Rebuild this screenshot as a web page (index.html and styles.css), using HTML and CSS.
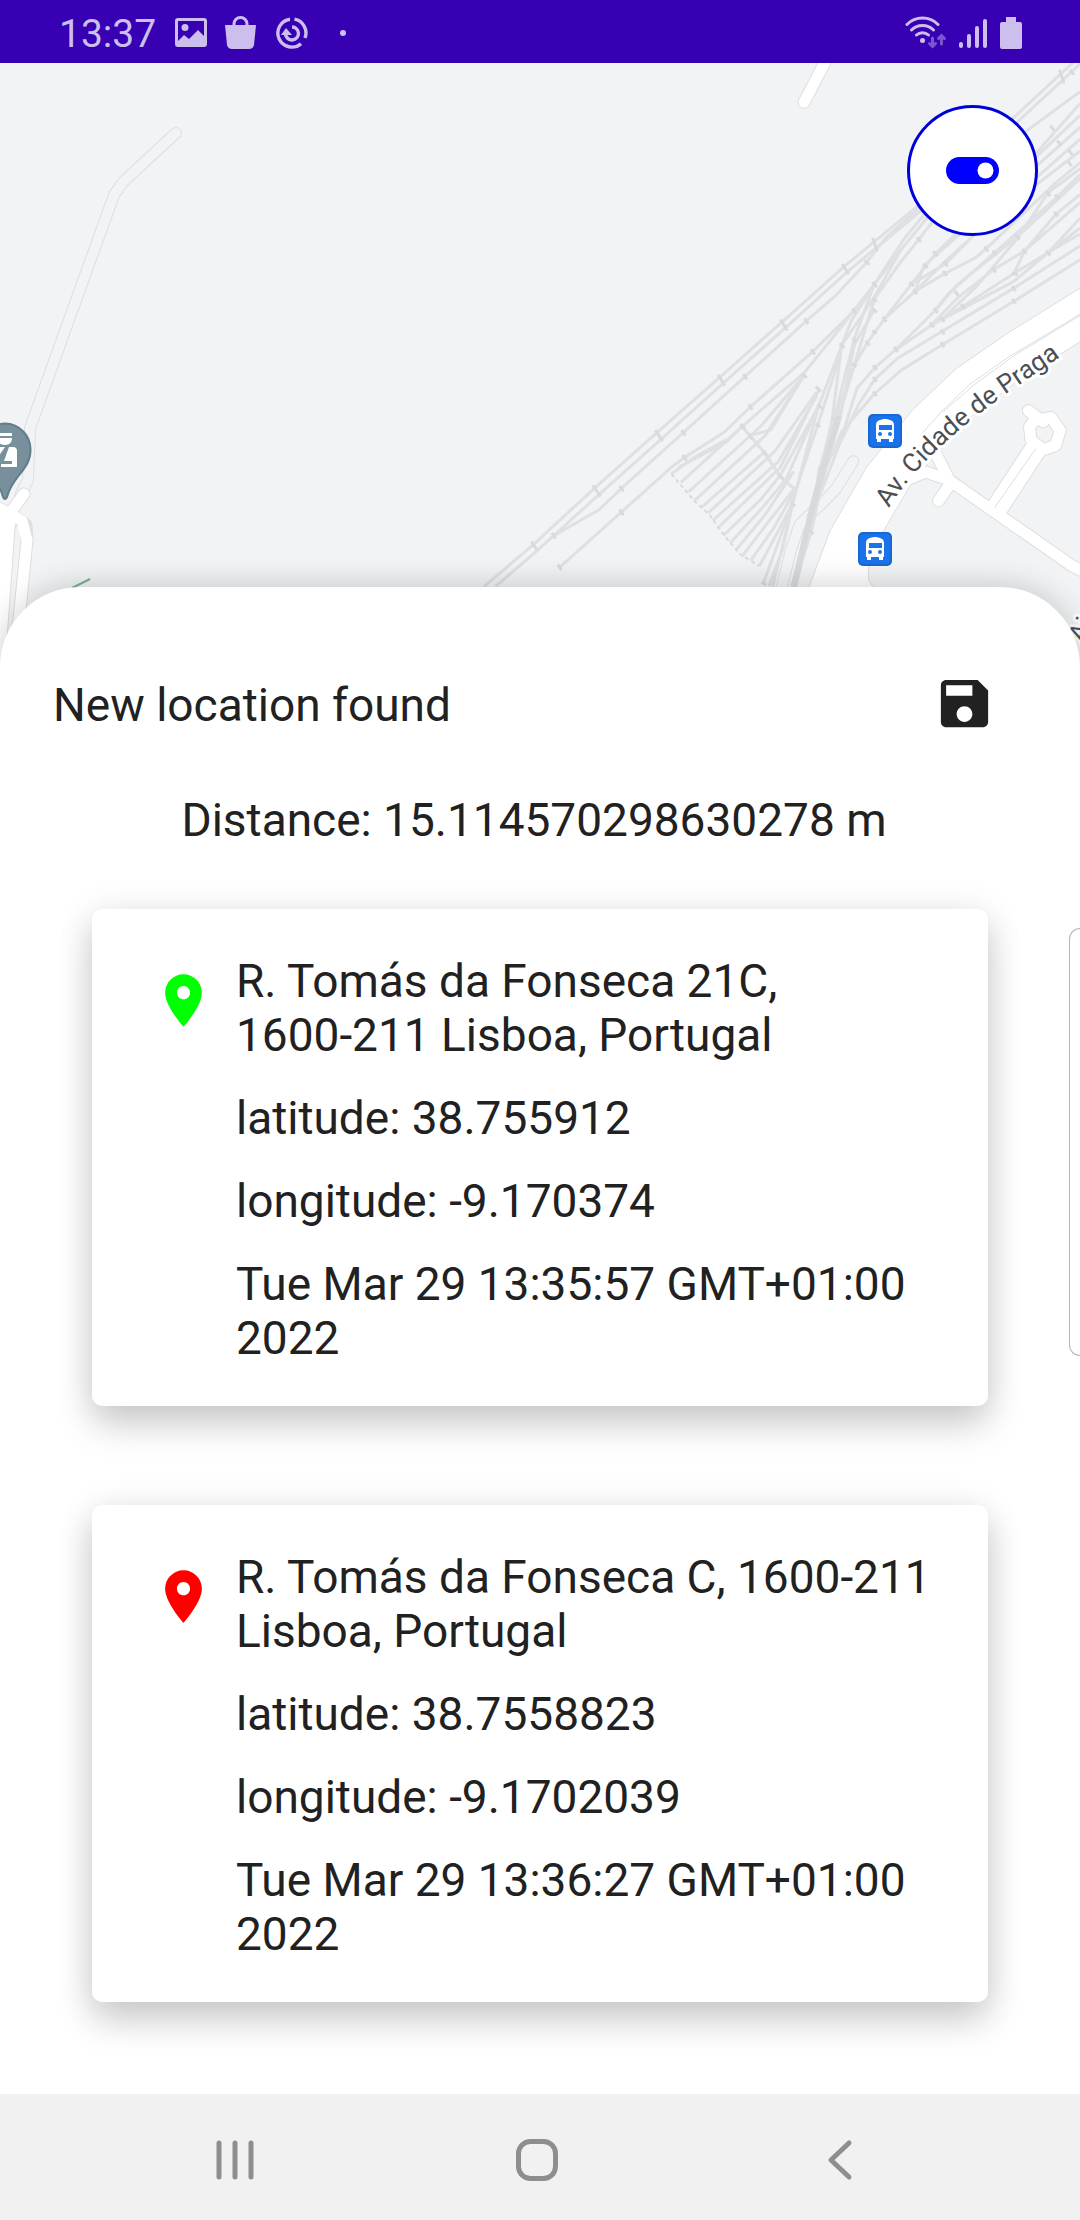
FILE: index.html
```html
<!DOCTYPE html>
<html lang="en">
<head>
<meta charset="utf-8">
<meta name="viewport" content="width=device-width, initial-scale=1">
<title>New location found</title>
<link rel="stylesheet" href="styles.css">
</head>
<body>
<div class="screen">
  <header class="status">
    <time class="clock">13:37</time>
    <div class="status-icons notices">
      <svg width="32" height="34" viewBox="0 0 32 34" aria-hidden="true"><path fill="currentColor" fill-rule="evenodd" d="M3 2h26q3 0 3 3v23q0 3-3 3H3q-3 0-3-3V5q0-3 3-3zM3 5v20l6-6 5 4 9-9 6 6V5zM10 8a3.500 3.500 0 1 1 0 7 3.500 3.500 0 0 1 0-7z"/></svg>
      <svg width="32" height="34" viewBox="0 0 32 34" aria-hidden="true"><path fill="currentColor" d="M0 9h31l-2 20q-1 4-5 4H7q-4 0-5-4z"/><path fill="none" stroke="currentColor" stroke-width="3" d="M9 10V8a6.500 6.500 0 0 1 13 0v2"/></svg>
      <svg width="34" height="34" viewBox="0 0 34 34" fill="none" stroke="currentColor" stroke-width="3.400" aria-hidden="true"><path d="M15 3.200a14 14 0 1 0 11 24.500M19.500 3.200A14 14 0 0 1 30 22"/><path d="M17 11a6.500 6.500 0 1 1-6.500 7"/><path fill="currentColor" stroke="none" d="M11 12l6 7H6z"/></svg>
      <svg class="more" width="8" height="34" viewBox="0 0 8 34" aria-hidden="true"><circle cx="4" cy="17" r="3" fill="currentColor"/></svg>
    </div>
    <div class="status-icons system">
      <svg width="42" height="34" viewBox="0 0 42 34" fill="none" stroke="currentColor" stroke-linecap="round" aria-hidden="true"><path stroke-width="3" d="M2 8.500a22 22 0 0 1 31 0M6.500 14a15.500 15.500 0 0 1 22 0M11.500 19a9 9 0 0 1 12 0"/><circle cx="17.500" cy="24.500" r="2.500" fill="currentColor" stroke="none"/><path class="traffic" stroke-width="3" d="M27.500 22v8.500m-3-3l3 3 3-3M36.500 28v-8.500m-3 3l3-3 3 3"/></svg>
      <svg width="30" height="34" viewBox="0 0 30 34" stroke="currentColor" stroke-width="4" stroke-linecap="round" aria-hidden="true"><path d="M4 28v2M12 20v10M20 12v18M28 5v25"/></svg>
      <svg width="22" height="34" viewBox="0 0 22 34" aria-hidden="true"><path fill="currentColor" d="M6 1h10v5h4q2 0 2 2v23q0 2-2 2H2q-2 0-2-2V8q0-2 2-2h4z"/></svg>
    </div>
  </header>

  <main class="content">
    <section class="map" aria-label="Map">
      <svg class="map-canvas" viewBox="0 63 1080 604" preserveAspectRatio="xMaxYMin slice">
        <g class="lane-edge"><path d="M176 133L123 182 114 195 30 428 28 480 20 496"/></g>
        <g class="lane-fill"><path d="M176 133L123 182 114 195 30 428 28 480 20 496"/></g>
        <g class="street-edge"><path d="M24 494L10 513 26 525 27 540 17 640"/></g>
        <path class="avenue" d="M-4 500L8 506 18 515 15 528 5 667H-4z"/>
        <g class="street"><path d="M24 494L10 513 22 521 27 540 17 640"/></g>
        <path class="trail" d="M72 588L90 579"/>

        <g transform="translate(480 60) scale(.3827 .3954)">
          <g class="lane-edge"><path d="M975 1015L930 1085 900 1115 835 1175 812 1240 785 1350"/></g>
          <g class="lane-fill"><path d="M975 1015L930 1085 900 1115 835 1175 812 1240 785 1350"/></g>
          <g class="tracks">
            <path d="M10 1332L140 1225 300 1082 463 942 627 802 790 662 952 522 1140 372 1395 145 1568-10"/>
            <path d="M40 1332L150 1240 310 1100 472 960 635 818 797 678 958 537 1160 375 1395 165 1568 10"/>
            <path d="M193 1203L310 1138 370 1083 532 942 693 800 853 660 930 595 1010 512 1060 450 1150 372"/>
            <path d="M208 1283L370 1143 500 1030 535 1005 640 940 707 877 870 737 978 634 1030 568 1100 480 1180 385 1300 270 1568 80"/>
            <path d="M520 1030L645 965 685 927 848 790 940 680 1030 568 1110 450 1170 380"/>
            <path d="M500 1047L560 1005 645 960M525 1068L685 927M545 1092L735 925 845 800M560 1115L745 950 845 800M580 1130L745 990M597 1145L770 990 880 840M608 1165L780 1015 880 850M620 1185L785 1030 885 835M637 1202L735 1110 785 1050 885 875M655 1220L740 1130 800 1060 885 875M670 1238L745 1150 820 1040M685 1255L760 1160 825 1080M708 1265L770 1180 825 1085M730 1280L780 1190 817 1122"/>
            <path d="M740 1325L800 1165 840 1045 883 922 927 790 945 722 1030 600 1100 480M755 1330L790 1240 817 1122 883 880 945 722 970 660 1030 568M765 1332L817 1122"/>
            <path d="M845 800L760 935 705 950M685 927L745 995 785 1055 822 1085"/>
            <path d="M815 1332L860 1155 890 1035 920 910 945 722M825 1332L870 1155 890 1035 925 910 978 705 1030 568M820 1332L865 1195 885 1040 930 900 978 772 1030 605 1100 510 1147 453 1190 400"/>
            <path d="M865 1195L890 1085 915 990 940 910 978 720 1030 632M870 1140L925 945 978 772 1012 715 1057 655 1127 567 1190 490 1300 385 1568 140"/>
            <path d="M890 1040L940 970 985 830 1032 778 1087 732 1190 633 1245 570 1405 447 1568 300M880 1120L940 970 990 870 1032 807 1090 755 1208 686 1395 577 1568 470M900 1040L945 940 1032 843 1100 785 1208 720 1395 610 1568 505"/>
            <path d="M1057 655L1137 585 1215 540 1295 500 1323 477 1505 310 1568 260M1127 567L1217 515 1345 390 1568 200M1137 585L1160 520 1290 410 1568 170M1137 585L1215 510 1340 400 1568 230"/>
            <path d="M1087 732L1180 670 1250 600 1342 530 1423 483 1505 390 1568 340M1180 670L1262 623 1395 540 1423 483 1568 360M1208 655L1300 570 1405 450 1485 335 1568 275M1190 633L1225 590 1345 487 1510 345 1568 290M1262 623L1395 540 1485 487 1568 400M1395 540L1505 475 1568 440M1180 670L1395 560 1485 487 1568 425M1340 360L1568 110"/>
          </g>
          <path class="track-core" d="M820 1332L870 1125 910 990 938 900"/>
          <g class="joints">
            <path d="M134 1218l14 20M295 1076l20 28M458 936l19 28M622 796l18 28M785 656l18 28M947 516l16 26M1026 450l12 34M188 1196l10 14M203 1276l10 14M365 1137l10 14M365 1077l10 14M527 936l10 14M530 999l10 14M688 794l10 14M702 871l10 14M848 654l10 14M865 731l10 14M973 628l10 14M1025 562l12 12M1005 506l12 12M842 794l12 10M680 921l12 12M702 947l10 12M740 989l10 12M780 1049l14 12M877 826l14 12M882 870l12 12M877 920l12 8M918 905l18 10M940 716l12 12M974 702l10 12M972 768l12 8M1008 710l10 12M1025 603l12 8M1025 628l12 10M1025 684l12 8M1052 650l10 12M1122 562l12 10M1132 580l10 12M1142 448l10 12M1184 484l12 12M1158 516l12 10M1212 510l10 12M1210 534l10 12M1318 472l10 12M1340 482l10 12M1400 442l10 12M1418 478l10 12M1338 525l10 12M1390 538l16 6M1390 572l10 12M1390 604l10 12M1186 628l10 12M1204 650l10 12M1204 682l10 12M1204 714l10 12M1176 664l10 12M1082 726l10 12M1027 772l10 12M1027 802l10 12M1027 838l10 12M1240 584l10 12M1257 618l10 12M1480 482l10 12M1480 332l10 12M1500 384l10 12M1503 340l10 12M1490 166l10 12M1508 204l10 12M1538 228l10 12M1536 256l10 12M1514 25l12 34M1542 25l10 12M886 1030l10 12M855 1150l12 10M860 1190l12 8M812 1120l12 8M736 1320l12 8"/>
          </g>
          <path class="ladder-foot" d="M500 1047L560 1115 600 1150 640 1205 680 1250 730 1280"/>

          <g class="street-edge">
            <path d="M915-20L847 107M1120 1060L1165 1042 1225 1062 1545 1278 1590 1300M1188 990L1230 1070 1198 1115M1433 887L1472 915"/>
            <path class="wide" d="M1345 1142L1458 975"/>
            <path d="M1448 912L1492 904 1516 937 1504 975 1472 985 1440 962 1436 928z"/>
          </g>
          <path class="avenue" d="M855 1345L915 1190 1008 1033 1130 885 1245 780 1380 690 1580 570V705L1400 815 1280 905 1170 1020 1125 1075 1055 1190 1015 1260V1315L1035 1345z"/>
          <g class="street">
            <path d="M915-20L847 107M1110 1064L1165 1042 1225 1062 1545 1278 1590 1300M1188 990L1230 1070 1198 1115M1433 887L1472 915"/>
            <path class="wide" d="M1345 1142L1458 975"/>
            <path d="M1448 912L1492 904 1516 937 1504 975 1472 985 1440 962 1436 928z"/>
          </g>
          <path class="median" d="M1580 636L1380 752 1280 820 1205 890 1150 950M1345 1132L1452 983"/>
          <path class="median" d="M1570 645L1400 745 1290 822 1210 890"/>
        </g>

        <path id="praga" fill="none" d="M889 508C912 470 948 438 983 411S1040 372 1080 343"/>
        <text class="street-name"><textPath href="#praga">Av. Cidade de Praga</textPath></text>
        <text class="street-name" transform="translate(1083 644) rotate(-62)">Ai</text>

        <g id="bus-stop">
          <rect x="868" y="414" width="34" height="34" rx="5" fill="#1967d2"/>
          <rect x="870" y="416" width="30" height="30" rx="4" fill="#1a73e8"/>
          <path fill="#fff" fill-rule="evenodd" d="M880 420q5-2 10 0 4 1 4 5v14h-1v3h-4v-3h-8v3h-4v-3h-1v-14q0-4 4-5zM879 425v5h13v-5zM880 432a2 2 0 1 0 0 4 2 2 0 0 0 0-4zM890 432a2 2 0 1 0 0 4 2 2 0 0 0 0-4z"/>
        </g>
        <use href="#bus-stop" x="-10" y="118"/>

        <path fill="#78909c" stroke="#607d8b" stroke-width="2" d="M5 423.500A26 26 0 0 1 30.500 450C30.500 470 12 476 7 497Q5 501 3 497C-2 476-20 470-20 450A26 26 0 0 1 5 423.500z"/>
        <path fill="#fff" d="M-4 433H12v3H-4zM-3 438H12Q12 445 5 445T-3 438zM-6 447H5L-6 463zM9 447h4q4 0 4 4v16H1v-3h11v-3H4z"/>
      </svg>
      <button class="tracking" type="button" aria-pressed="true" aria-label="Toggle tracking">
        <svg width="53" height="27" viewBox="0 0 53 27" aria-hidden="true"><rect width="53" height="27" rx="13.500" fill="#00f"/><circle cx="39.500" cy="13.500" r="8" fill="#fff"/></svg>
      </button>
    </section>

    <section class="sheet">
      <div class="sheet-head">
        <h1 class="title">New location found</h1>
        <button class="save" type="button" aria-label="Save location">
          <svg width="63" height="63" viewBox="0 0 24 24" aria-hidden="true"><path fill="currentColor" d="M17 3H5c-1.110 0-2 .9-2 2v14c0 1.100.89 2 2 2h14c1.100 0 2-.9 2-2V7l-4-4zm-5 16c-1.660 0-3-1.340-3-3s1.340-3 3-3 3 1.340 3 3-1.340 3-3 3zm3-10H5V5h10v4z"/></svg>
        </button>
      </div>
      <p class="distance">Distance: 15.114570298630278 m</p>

      <div class="cards">
        <article class="card">
          <svg class="pin pin-start" width="63" height="63" viewBox="0 0 24 24" aria-hidden="true"><path fill="currentColor" d="M12 2C8.130 2 5 5.130 5 9c0 5.250 7 13 7 13s7-7.750 7-13c0-3.870-3.130-7-7-7zm0 9.500c-1.380 0-2.500-1.120-2.500-2.500s1.120-2.500 2.500-2.500 2.500 1.120 2.500 2.500-1.120 2.500-2.500 2.500z"/></svg>
          <div class="details">
            <p>R. Tomás da Fonseca 21C, <span class="postcode">1600-211</span> Lisboa, Portugal</p>
            <p>latitude: 38.755912</p>
            <p>longitude: -9.170374</p>
            <p>Tue Mar 29 13:35:57 GMT+01:00 2022</p>
          </div>
        </article>
        <article class="card">
          <svg class="pin pin-end" width="63" height="63" viewBox="0 0 24 24" aria-hidden="true"><path fill="currentColor" d="M12 2C8.130 2 5 5.130 5 9c0 5.250 7 13 7 13s7-7.750 7-13c0-3.870-3.130-7-7-7zm0 9.500c-1.380 0-2.500-1.120-2.500-2.500s1.120-2.500 2.500-2.500 2.500 1.120 2.500 2.500-1.120 2.500-2.500 2.500z"/></svg>
          <div class="details">
            <p>R. Tomás da Fonseca C, <span class="postcode">1600-211</span> Lisboa, Portugal</p>
            <p>latitude: 38.7558823</p>
            <p>longitude: -9.1702039</p>
            <p>Tue Mar 29 13:36:27 GMT+01:00 2022</p>
          </div>
        </article>
      </div>
      <div class="edge-handle"></div>
    </section>
  </main>

  <nav class="nav" aria-label="System">
    <button type="button" aria-label="Recent apps"><svg width="44" height="44" viewBox="0 0 44 44"><path d="M6 5v34M22 5v34M38 5v34"/></svg></button>
    <button type="button" aria-label="Home"><svg width="44" height="44" viewBox="0 0 44 44"><rect x="3.500" y="3.500" width="37" height="37" rx="12"/></svg></button>
    <button type="button" aria-label="Back"><svg width="44" height="44" viewBox="0 0 44 44"><path d="M31 5L13 22 31 39"/></svg></button>
  </nav>
</div>
</body>
</html>
```
FILE: styles.css
```css
* {
  box-sizing: border-box;
}

body {
  margin: 0;
  background: #fff;
  color: #212121;
  font-family: Roboto, "Liberation Sans", sans-serif;
  font-size: 46px;
  line-height: 54px;
}

h1,
p {
  margin: 0;
  font-size: inherit;
  font-weight: 400;
}

button {
  display: flex;
  align-items: center;
  justify-content: center;
  padding: 0;
  border: 0;
  background: none;
  color: inherit;
  cursor: pointer;
}

svg {
  display: block;
}

.screen {
  display: flex;
  flex-direction: column;
  min-height: 100vh;
}

/* Status bar */
.status {
  display: flex;
  align-items: center;
  gap: 19px;
  height: 63px;
  padding: 2px 58px 0 59px;
  background: #3700b3;
  color: #cdbfed;
}

.clock {
  font-size: 39px;
  line-height: 46px;
  padding-top: 3px;
}

.status-icons {
  display: flex;
  align-items: center;
}

.notices {
  gap: 18px;
}

.more {
  margin-left: 12px;
}

.system {
  gap: 10px;
  margin-left: auto;
}

.system svg:last-child {
  margin-left: 3px;
}

.traffic {
  opacity: 0.45;
}

.content {
  flex: 1;
}

/* Map */
.map {
  position: relative;
  height: 604px;
  overflow: hidden;
  background: #f1f3f5;
}

.map-canvas {
  width: 100%;
  height: 100%;
}

.map-canvas path {
  vector-effect: non-scaling-stroke;
}

.lane-edge path,
.lane-fill path,
.street-edge path,
.street path,
.tracks path,
.joints path,
.median,
.ladder-foot,
.track-core {
  fill: none;
  stroke-linejoin: round;
}

.lane-edge path,
.lane-fill path,
.street-edge path,
.street path {
  stroke-linecap: round;
}

.lane-edge path {
  stroke: #dcdee0;
  stroke-width: 12px;
}

.lane-fill path {
  stroke: #f1f3f5;
  stroke-width: 10px;
}

.street-edge path {
  stroke: #dcdee0;
  stroke-width: 13px;
}

.street path {
  stroke: #fff;
  stroke-width: 11px;
}

.street-edge .wide {
  stroke-width: 23px;
  stroke-linecap: butt;
}

.street .wide {
  stroke-width: 21px;
  stroke-linecap: butt;
}

.avenue {
  fill: #fff;
  stroke: #dcdee0;
  stroke-width: 1px;
}

.median {
  stroke: #dcdee0;
  stroke-width: 1px;
}

.trail {
  stroke: #7db48b;
  stroke-width: 2px;
}

.tracks path {
  stroke: #dfe0e3;
  stroke-width: 3px;
}

.track-core {
  stroke: #d7dadd;
  stroke-width: 6px;
}

.joints path {
  stroke: #d8dadd;
  stroke-width: 3px;
}

.ladder-foot {
  stroke: #d8dadd;
  stroke-width: 2px;
  stroke-dasharray: 4 3;
}

.street-name {
  fill: #4b4e53;
  stroke: #fff;
  stroke-width: 6px;
  stroke-linejoin: round;
  paint-order: stroke;
  font-size: 26px;
}

.tracking {
  position: absolute;
  top: 42px;
  right: 42px;
  width: 131px;
  height: 131px;
  border: 3px solid #0000dc;
  border-radius: 50%;
  background: #fff;
}

/* Result sheet */
.sheet {
  position: relative;
  margin-top: -80px;
  padding: 53px 0 92px;
  border-radius: 80px 80px 0 0;
  background: #fff;
  box-shadow: 0 0 32px rgba(0, 0, 0, 0.2);
}

.sheet-head {
  display: flex;
  align-items: center;
  justify-content: space-between;
  padding: 0 53px;
}

.title {
  padding-top: 3px;
}

.save {
  width: 126px;
  height: 126px;
}

.distance {
  padding: 27px 65px 0 53px;
  text-align: center;
}

.cards {
  display: grid;
  gap: 99px;
  padding: 62px 92px 0;
}

.card {
  display: flex;
  align-items: flex-start;
  gap: 21px;
  padding: 45px 42px 41px 60px;
  border-radius: 10px;
  background: #fff;
  box-shadow: 0 20px 36px rgba(0, 0, 0, 0.16), 0 4px 36px rgba(0, 0, 0, 0.1);
}

.pin {
  flex: none;
  margin-top: 15px;
}

.pin-start {
  color: #0f0;
}

.pin-end {
  color: #f00;
}

.details {
  display: grid;
  gap: 29px;
}

.postcode {
  white-space: nowrap;
}

.edge-handle {
  position: absolute;
  top: 341px;
  right: 0;
  width: 11px;
  height: 428px;
  border: 1px solid #b4b4b4;
  border-right: 0;
  border-radius: 14px 0 0 14px;
  background: #fff;
}

/* Navigation bar */
.nav {
  position: relative;
  display: grid;
  grid-template-columns: repeat(3, 1fr);
  height: 126px;
  padding: 5px 89px 0 84px;
  background: #f1f1f1;
}

.nav svg {
  fill: none;
  stroke: #8e8e8e;
  stroke-width: 5px;
  stroke-linecap: round;
  stroke-linejoin: round;
}
```
